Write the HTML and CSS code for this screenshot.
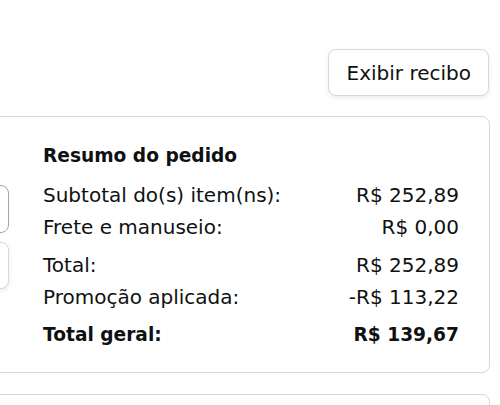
FILE: index.html
```html
<!DOCTYPE html>
<html lang="pt-BR">
<head>
<meta charset="utf-8">
<link rel="stylesheet" href="styles.css">
</head>
<body>
<div class="page">
  <div class="actions">
    <button class="btn">Exibir recibo</button>
  </div>
  <div class="card">
    <div class="left">
      <div class="select"></div>
      <div class="ghost-btn"></div>
    </div>
    <div class="summary">
      <h2 class="title">Resumo do pedido</h2>
      <div class="group">
        <div class="row"><span>Subtotal do(s) item(ns):</span><span>R$ 252,89</span></div>
        <div class="row"><span>Frete e manuseio:</span><span>R$ 0,00</span></div>
      </div>
      <div class="group">
        <div class="row"><span>Total:</span><span>R$ 252,89</span></div>
        <div class="row"><span>Promoção aplicada:</span><span>-R$ 113,22</span></div>
      </div>
      <div class="group">
        <div class="row bold"><span>Total geral:</span><span>R$ 139,67</span></div>
      </div>
    </div>
  </div>
  <div class="card next"></div>
</div>
</body>
</html>
```

FILE: styles.css
```css
* { box-sizing: border-box; }
html, body { margin: 0; padding: 0; background: #fff; overflow: hidden; }
body {
  font-family: "DejaVu Sans", "Noto Sans", sans-serif;
  color: #0F1111;
  font-size: 20px;
}
.page { width: 500px; height: 405px; overflow: hidden; }
.actions {
  display: flex;
  justify-content: flex-end;
  padding: 49px 11px 0 0;
}
.btn {
  font-family: inherit;
  font-size: 20px;
  color: #0F1111;
  background: #fff;
  border: 1px solid #D5D9D9;
  border-radius: 8px;
  box-shadow: 0 2px 5px 0 rgba(213, 217, 217, 0.5);
  height: 47px;
  padding: 0 17px 0 18px;
  line-height: 24px;
}
.card {
  margin-left: -300px;
  width: 790px;
  border: 1px solid #D5D9D9;
  border-radius: 8px;
  display: flex;
  margin-top: 20px;
  padding: 23px 30px 21px 0;
}
.left { flex: 1; padding-top: 45px; display: flex; flex-direction: column; gap: 9px; }
.select {
  height: 48px;
  border: 1px solid #A6A6A6;
  border-radius: 8px;
  background: #fff;
}
.ghost-btn {
  height: 47px;
  border: 1px solid #D5D9D9;
  border-radius: 8px;
  background: #fff;
  box-shadow: 0 2px 5px 0 rgba(213, 217, 217, 0.5);
}
.summary { width: 416px; margin-left: 34px; }
.title {
  margin: 0;
  font-size: 18.6px;
  font-weight: 700;
  line-height: 32px;
}
.group { margin-top: 6px; }
.group:first-of-type { margin-top: 7px; }
.row {
  display: flex;
  justify-content: space-between;
  line-height: 32px;
}
.bold { font-weight: 700; font-size: 18.6px; }
.next { margin-top: 21px; height: 60px; padding: 0; }
```
